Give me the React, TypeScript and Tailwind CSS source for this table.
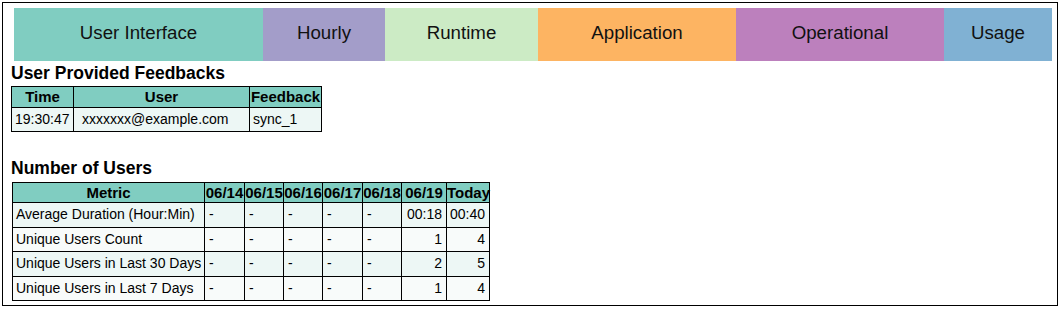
import React from "react";

const tabs = [
  { label: "User Interface", w: "w-[249px]", bg: "bg-[#80cdc1]" },
  { label: "Hourly", w: "w-[122px]", bg: "bg-[#a39dc9]" },
  { label: "Runtime", w: "w-[153px]", bg: "bg-[#ccebc5]" },
  { label: "Application", w: "w-[198px]", bg: "bg-[#fdb462]" },
  { label: "Operational", w: "w-[208px]", bg: "bg-[#bc80bd]" },
  { label: "Usage", w: "w-[108px]", bg: "bg-[#80b1d3]" },
];

const dateCols = [
  { label: "06/14", w: "w-[40px]" },
  { label: "06/15", w: "w-[39px]" },
  { label: "06/16", w: "w-[39px]" },
  { label: "06/17", w: "w-[40px]" },
  { label: "06/18", w: "w-[39px]" },
];

const rows = [
  { metric: "Average Duration (Hour:Min)", a: "00:18", b: "00:40", bg: "bg-[#edf7f5]" },
  { metric: "Unique Users Count", a: "1", b: "4", bg: "bg-[#f8fbfa]" },
  { metric: "Unique Users in Last 30 Days", a: "2", b: "5", bg: "bg-[#edf7f5]" },
  { metric: "Unique Users in Last 7 Days", a: "1", b: "4", bg: "bg-[#f8fbfa]" },
];

const th = "border border-black bg-[#80cdc1] font-bold text-[15px] leading-[17px] py-[1px] px-0 text-center text-black";
const td = "border border-black text-[14px] leading-[15.5px] py-[4px] px-[3px] text-black";

export default function App() {
  return (
    <div className="w-[1061px] h-[309px] bg-white pt-[2px] pl-[2px]" style={{ fontFamily: '"Liberation Sans", Arial, sans-serif' }}>
      <div className="w-[1056px] h-[304px] border border-black pl-[8px] pt-[5px]">
        <div className="ml-[3px] flex h-[53px] w-[1038px]">
          {tabs.map((t) => (
            <div key={t.label} className={`${t.w} ${t.bg} flex items-center justify-center pb-[2px] text-[18.7px] text-[#111]`}>
              {t.label}
            </div>
          ))}
        </div>

        <h3 className="mt-[1.5px] text-[17.5px] leading-[20px] font-bold text-black">User Provided Feedbacks</h3>
        <table className="mt-[3.5px] border-collapse table-fixed w-[310px]">
          <thead>
            <tr>
              <th className={`${th} w-[62px] leading-[18px]`}>Time</th>
              <th className={`${th} w-[176px] leading-[18px]`}>User</th>
              <th className={`${th} w-[72px] leading-[18px]`}>Feedback</th>
            </tr>
          </thead>
          <tbody>
            <tr className="bg-[#edf7f5]">
              <td className={`${td} leading-[15px]`}>19:30:47</td>
              <td className={`${td} leading-[15px] pl-[8px]`}>xxxxxxx@example.com</td>
              <td className={`${td} leading-[15px]`}>sync_1</td>
            </tr>
          </tbody>
        </table>

        <h3 className="mt-[26px] text-[17.5px] leading-[20px] font-bold text-black">Number of Users</h3>
        <table className="mt-[4px] ml-[1px] border-collapse table-fixed w-[477px]">
          <thead>
            <tr>
              <th className={`${th} w-[192px]`}>Metric</th>
              {dateCols.map((c) => (
                <th key={c.label} className={`${th} ${c.w}`}>
                  {c.label}
                </th>
              ))}
              <th className={`${th} w-[45px]`}>06/19</th>
              <th className={`${th} w-[43px]`}>Today</th>
            </tr>
          </thead>
          <tbody>
            {rows.map((r) => (
              <tr key={r.metric} className={r.bg}>
                <td className={`${td} whitespace-nowrap`}>{r.metric}</td>
                {dateCols.map((c) => (
                  <td key={c.label} className={`${td} pl-[4px]`}>
                    -
                  </td>
                ))}
                <td className={`${td} text-right pr-[4px]`}>{r.a}</td>
                <td className={`${td} text-right pr-[4px]`}>{r.b}</td>
              </tr>
            ))}
          </tbody>
        </table>
      </div>
    </div>
  );
}
